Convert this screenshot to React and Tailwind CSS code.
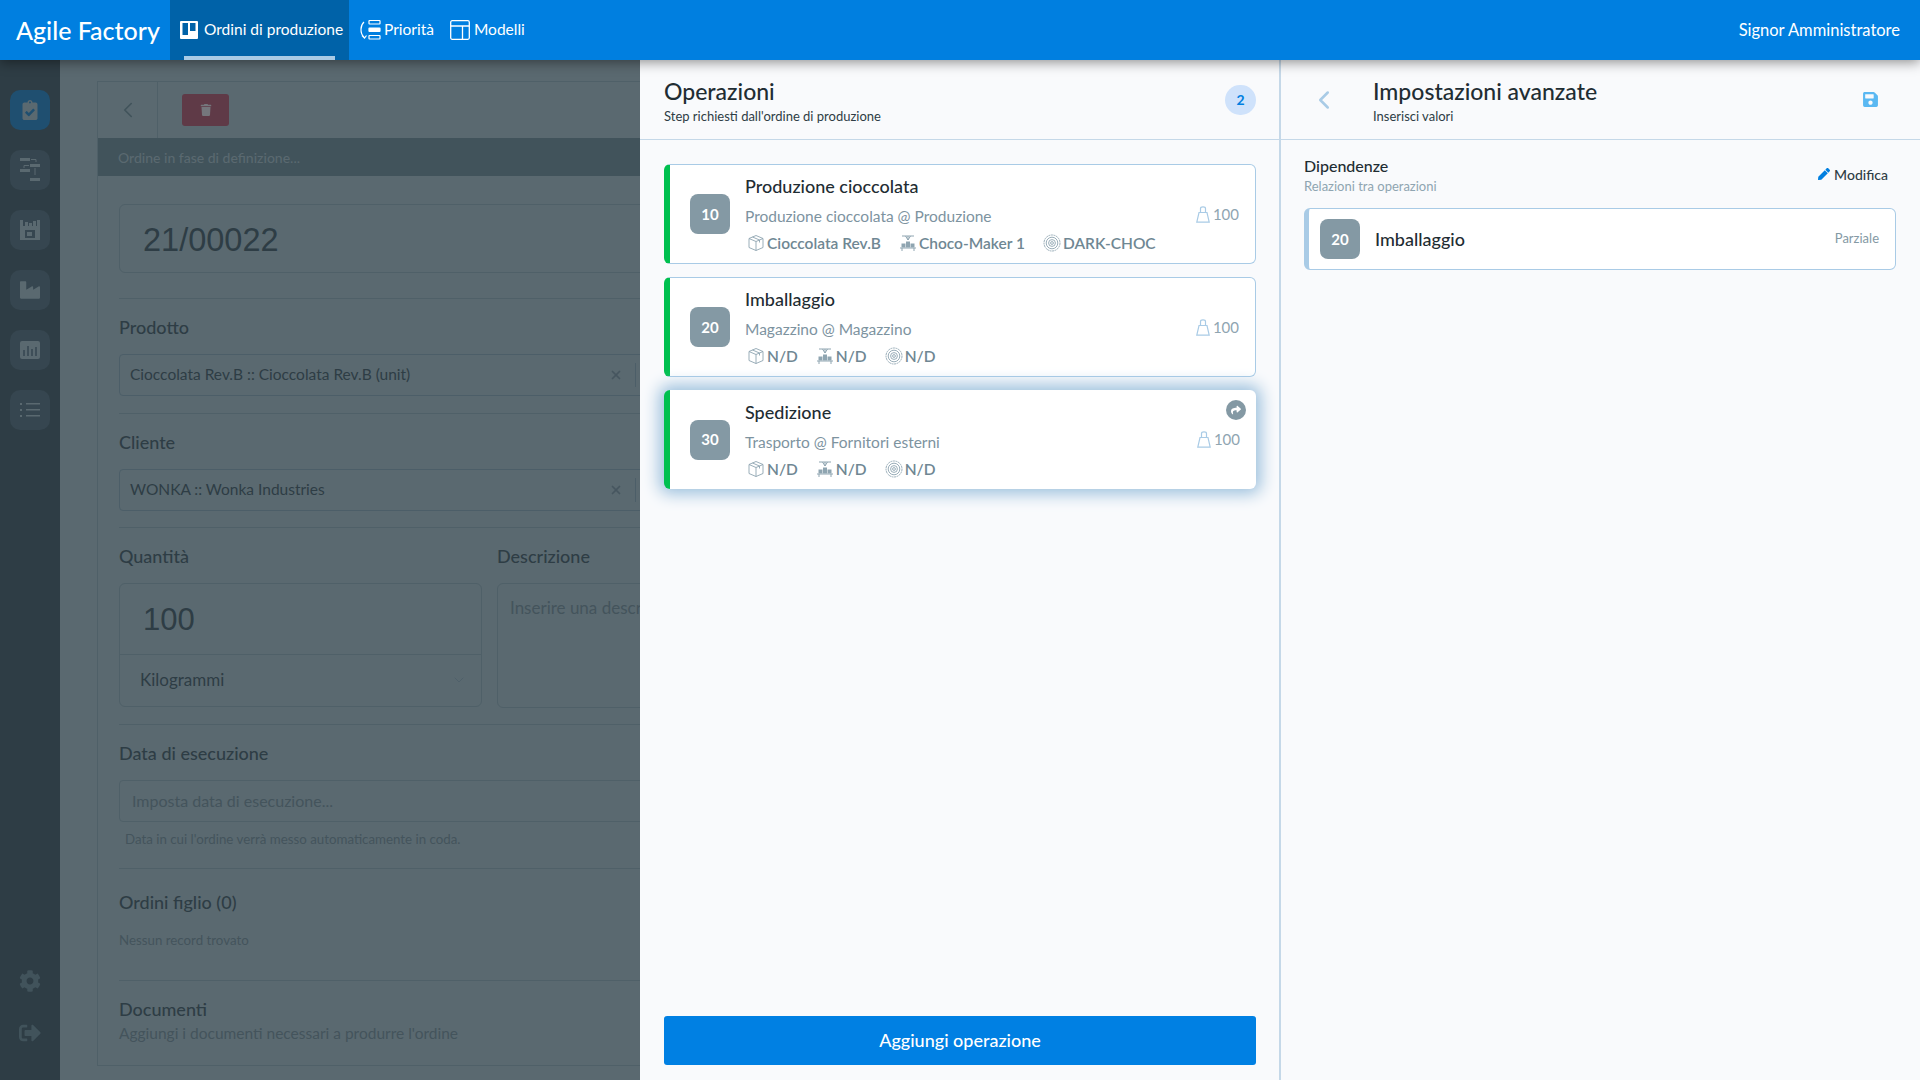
import { FaClipboardCheck, FaIndustry, FaTrash, FaCog, FaSave, FaPen, FaShare, FaSignOutAlt } from 'react-icons/fa';
import { ChevronLeft, ChevronDown, X } from 'lucide-react';

const font = { fontFamily: 'Lato, "Noto Sans", sans-serif' };
const digits = { fontFamily: '"Liberation Sans", sans-serif' };

const BoardIcon = () => (
  <svg width="18" height="18" viewBox="0 0 18 18" className="shrink-0">
    <rect x="0" y="0" width="18" height="18" rx="1" fill="#fff" />
    <rect x="2.5" y="2" width="5.5" height="12" fill="#0062a8" />
    <rect x="10" y="2" width="5.5" height="8" fill="#0062a8" />
  </svg>
);

const PriorityIcon = () => (
  <svg width="22" height="22" viewBox="0 0 22 22" fill="none" stroke="#fff" strokeWidth="1.2" className="shrink-0">
    <rect x="10" y="1.5" width="11" height="3.5" rx="0.5" />
    <rect x="10" y="9" width="11" height="3.5" rx="0.5" fill="#fff" />
    <rect x="10" y="16.5" width="11" height="3.5" rx="0.5" />
    <path d="M5 3C1.5 6 0.5 14 5 18M3 16.5L5.5 19L7.5 16.5" />
  </svg>
);

const TemplateIcon = () => (
  <svg width="20" height="20" viewBox="0 0 20 20" fill="none" stroke="#fff" strokeWidth="1.3" className="shrink-0">
    <rect x="0.7" y="0.7" width="18.6" height="18.6" rx="1.5" />
    <path d="M1 6H19M12.5 6V19" />
  </svg>
);

const BoxIcon = () => (
  <svg width="18" height="18" viewBox="0 0 18 18" fill="none" stroke="#8fa5b1" strokeWidth="0.9" className="shrink-0">
    <path d="M9 1.5L16 4.5V13.5L9 16.5L2 13.5V4.5Z" />
    <path d="M2 4.5L9 7.5L16 4.5M9 7.5V16.5M5.5 3L12.5 6V8.5" />
  </svg>
);

const MachineIcon = () => (
  <svg width="18" height="18" viewBox="0 0 18 18" fill="none" stroke="#8fa5b1" strokeWidth="1" className="shrink-0">
    <path d="M3 2H15M9 2V6M6.5 2L9 6L11.5 2M1 14H17M3 14V17M15 14V17" />
    <rect x="3" y="10" width="3" height="3" fill="#8fa5b1" />
    <rect x="7.5" y="8" width="3" height="5" fill="#8fa5b1" />
    <rect x="12" y="10" width="3" height="3" fill="#8fa5b1" />
  </svg>
);

const RingIcon = () => (
  <svg width="18" height="18" viewBox="0 0 18 18" fill="none" stroke="#8fa5b1" strokeWidth="0.9" className="shrink-0">
    <circle cx="9" cy="9" r="8" strokeDasharray="2 0.6" />
    <circle cx="9" cy="9" r="5.8" />
    <circle cx="9" cy="9" r="3.4" />
    <circle cx="9" cy="9" r="1.4" />
  </svg>
);

const WeightIcon = () => (
  <svg width="14" height="17" viewBox="0 0 14 17" fill="none" stroke="#a9cbe6" strokeWidth="1.2" className="shrink-0">
    <path d="M4.5 6.5V2.5C4.5 1.4 5.4 0.8 7 0.8C8.6 0.8 9.5 1.4 9.5 2.5V6.5" />
    <path d="M3 6.5H11L13.2 16.2H0.8Z" />
  </svg>
);

const FlowIcon = () => (
  <svg width="20" height="24" viewBox="0 0 20 24" fill="#5a6970" className="shrink-0">
    <rect x="0" y="0" width="10" height="3" />
    <path d="M11 1.5H16V4" fill="none" stroke="#5a6970" />
    <rect x="10" y="6" width="10" height="3" />
    <rect x="0" y="11" width="10" height="3" />
    <path d="M9 7.5H4V10" fill="none" stroke="#5a6970" />
    <path d="M15 10V17" fill="none" stroke="#5a6970" />
    <rect x="10" y="20" width="10" height="3" />
  </svg>
);

const WarehouseIcon = () => (
  <svg width="20" height="20" viewBox="0 0 20 20" className="shrink-0">
    <path d="M0 0H3V6H17V0H20V20H0Z" fill="#5a6970" />
    <rect x="5" y="2" width="3" height="4" fill="#5a6970" />
    <rect x="9" y="3" width="3" height="3" fill="#5a6970" />
    <rect x="13" y="1" width="3" height="5" fill="#5a6970" />
    <rect x="5" y="10" width="10" height="8" fill="#364650" />
    <rect x="7" y="12" width="5" height="4" fill="#5a6970" />
  </svg>
);

const ChartIcon = () => (
  <svg width="20" height="18" viewBox="0 0 20 18" className="shrink-0">
    <rect width="20" height="18" rx="2" fill="#5a6970" />
    <path d="M4 9V15M8 5V15M12 8V15M16 6V15" stroke="#364650" strokeWidth="1.5" />
  </svg>
);

const ListIcon = () => (
  <svg width="20" height="16" viewBox="0 0 20 16" fill="#5a6970" className="shrink-0">
    <rect x="0" y="1" width="2" height="2" />
    <rect x="6" y="1" width="14" height="1.5" />
    <rect x="0" y="7" width="2" height="2" />
    <rect x="6" y="7" width="14" height="1.5" />
    <rect x="0" y="13" width="2" height="2" />
    <rect x="6" y="13" width="14" height="1.5" />
  </svg>
);

const Tile = ({ active, children }) => (
  <div className={`w-10 h-10 rounded-[10px] flex items-center justify-center ${active ? 'bg-[#1f4f70]' : 'bg-[#364650]'}`}>
    {children}
  </div>
);

const Sidebar = () => (
  <div className="w-[60px] shrink-0 bg-[#2e3d45] flex flex-col items-center pt-[30px] pb-[36px]">
    <div className="flex flex-col gap-5">
      <Tile active><FaClipboardCheck size={20} color="#5a6970" /></Tile>
      <Tile><FlowIcon /></Tile>
      <Tile><WarehouseIcon /></Tile>
      <Tile><FaIndustry size={20} color="#5a6970" /></Tile>
      <Tile><ChartIcon /></Tile>
      <Tile><ListIcon /></Tile>
    </div>
    <div className="mt-auto flex flex-col items-center gap-[30px]">
      <FaCog size={22} color="#41535b" />
      <FaSignOutAlt size={22} color="#41535b" />
    </div>
  </div>
);

const Field = ({ children }) => (
  <div className="h-[42px] border border-[#4c5e68] rounded-[4px] flex items-center pl-[10px] pr-[82px] text-[15.5px] text-[#2e3d45]">
    <span className="flex-1 whitespace-nowrap">{children}</span>
    <X size={14} strokeWidth={3} color="#46565f" />
    <div className="w-px h-6 bg-[#4c5e68] ml-[12px]" />
  </div>
);

const Divider = () => <div className="h-px bg-[#4f6068]" />;

const Label = ({ children }) => (
  <div className="text-[18px] leading-[24px] font-medium text-[#2e3d45] whitespace-nowrap">{children}</div>
);

const OrderForm = () => (
  <div className="w-[580px] shrink-0 bg-[#5a6970] overflow-hidden pt-[21px] pl-[37px] h-[1020px]">
    <div className="w-[800px] h-[985px] border border-[#4f6068] flex flex-col">
      <div className="h-[56px] flex items-center shrink-0">
        <div className="w-[60px] h-full flex items-center justify-center border-r border-[#4f6068]">
          <ChevronLeft size={26} strokeWidth={1.5} color="#41535b" />
        </div>
        <div className="ml-[24px] w-[47px] h-[32px] rounded-[3px] bg-[#5f3a47] flex items-center justify-center">
          <FaTrash size={12} color="#75767c" />
        </div>
      </div>
      <div className="h-[38px] shrink-0 bg-[#41535b] flex items-center pl-[20px] text-[14px] font-medium text-[#5a6970]">
        Ordine in fase di definizione...
      </div>
      <div className="pl-[21px] w-[621px]">
        <div className="mt-[28px] h-[69px] border border-[#4f6068] rounded-[6px] flex items-center pl-[23px] pt-[3px] text-[32.5px] text-[#2e3d45]" style={digits}>
          21/00022
        </div>
        <div className="mt-[25px]"><Divider /></div>
        <div className="mt-[16px]">
          <Label>Prodotto</Label>
          <div className="mt-[15px]"><Field>Cioccolata Rev.B :: Cioccolata Rev.B (unit)</Field></div>
          <div className="mt-[17px]"><Divider /></div>
          <div className="mt-[16px]"><Label>Cliente</Label></div>
          <div className="mt-[15px]"><Field>WONKA :: Wonka Industries</Field></div>
          <div className="mt-[16px]"><Divider /></div>
        </div>
        <div className="mt-[16px] flex gap-[15px]">
          <div className="w-[363px] shrink-0">
            <Label>Quantità</Label>
            <div className="mt-[15px] h-[124px] border border-[#4f6068] rounded-[6px] flex flex-col">
              <div className="h-[71px] flex items-center pl-[23px] pt-[3px] text-[31px] text-[#2e3d45] border-b border-[#4f6068]" style={digits}>100</div>
              <div className="flex-1 flex items-center justify-between pl-[20px] pr-[14px] pb-[2px] text-[17px] text-[#2e3d45]">
                Kilogrammi
                <ChevronDown size={16} strokeWidth={1.2} color="#4c5e68" />
              </div>
            </div>
          </div>
          <div className="flex-1 min-w-0">
            <Label>Descrizione</Label>
            <div className="mt-[15px] h-[125px] w-[400px] border border-[#4f6068] rounded-[6px] pl-[12px] pt-[11px] text-[17px] text-[#44545c] whitespace-nowrap">
              Inserire una descrizione
            </div>
          </div>
        </div>
        <div className="mt-[16px]"><Divider /></div>
        <div className="mt-[16px]">
          <Label>Data di esecuzione</Label>
          <div className="mt-[15px] h-[42px] border border-[#4f6068] rounded-[4px] flex items-center pl-[12px] text-[16px] text-[#44545c]">
            Imposta data di esecuzione...
          </div>
          <div className="mt-[9px] pl-[6px] text-[13.3px] leading-[16px] text-[#44545c]">
            Data in cui l'ordine verrà messo automaticamente in coda.
          </div>
          <div className="mt-[21px]"><Divider /></div>
          <div className="mt-[21px]"><Label>Ordini figlio (0)</Label></div>
          <div className="mt-[18px] text-[13.3px] leading-[16px] text-[#44545c]">Nessun record trovato</div>
          <div className="mt-[32px]"><Divider /></div>
          <div className="mt-[16px]"><Label>Documenti</Label></div>
          <div className="mt-[2px] text-[15.5px] leading-[20px] text-[#44545c]">Aggiungi i documenti necessari a produrre l'ordine</div>
        </div>
      </div>
    </div>
  </div>
);

const Meta = ({ icon, children }) => (
  <span className="flex items-center gap-[2px] whitespace-nowrap">
    {icon}
    {children}
  </span>
);

const StepBadge = ({ children }) => (
  <div className="w-10 h-10 shrink-0 rounded-[8px] bg-[#8499a4] flex items-center justify-center text-[15px] font-bold text-white">
    {children}
  </div>
);

const OperationCard = ({ number, title, desc, product, machine, code, selected }) => (
  <div className={`relative bg-white rounded-[6px] border-l-[6px] border-l-[#00c04f] flex items-center pl-[20px] pr-[16px] ${selected ? 'h-[99px] shadow-[0_0_16px_5px_#9cc0dd]' : 'h-[100px] border border-[#a9cbe6]'}`}>
    {selected && (
      <div className="absolute right-[10px] top-[10px] w-5 h-5 rounded-full bg-[#8499a4] flex items-center justify-center">
        <FaShare size={10} color="#fff" />
      </div>
    )}
    <StepBadge>{number}</StepBadge>
    <div className="ml-[15px] flex-1 min-w-0">
      <div className="text-[18px] leading-[24px] font-medium text-[#1f2d33] -mt-[1px]">{title}</div>
      <div className="mt-[8px] text-[15.5px] leading-[20px] text-[#7d939f]">{desc}</div>
      <div className="mt-[7px] pl-[2px] flex items-center gap-[18px] text-[15.5px] leading-[20px] font-semibold text-[#6f8793]">
        <Meta icon={<BoxIcon />}>{product}</Meta>
        <Meta icon={<MachineIcon />}>{machine}</Meta>
        <Meta icon={<RingIcon />}>{code}</Meta>
      </div>
    </div>
    <div className="flex items-center gap-[3px] text-[15px] text-[#8fa5b1]">
      <WeightIcon />
      100
    </div>
  </div>
);

const OperationsPanel = () => (
  <div className="w-[639px] shrink-0 bg-[#f9fafc] flex flex-col h-[1020px]">
    <div className="h-[80px] shrink-0 border-b border-[#c5d8e8] flex items-center justify-between pl-[24px] pr-[23px]">
      <div>
        <div className="mt-[1px] text-[23px] leading-[28px] font-medium text-[#1f2d33]">Operazioni</div>
        <div className="mt-[3px] text-[13px] leading-[16px] text-[#2e3d45]">Step richiesti dall'ordine di produzione</div>
      </div>
      <div className="w-[31px] h-[30px] rounded-full bg-[#cfe2fb] flex items-center justify-center text-[14px] font-bold text-[#007fe0]">2</div>
    </div>
    <div className="flex-1 flex flex-col gap-[13px] pl-[24px] pr-[23px] pt-[24px]">
      <OperationCard number="10" title="Produzione cioccolata" desc="Produzione cioccolata @ Produzione" product="Cioccolata Rev.B" machine="Choco-Maker 1" code="DARK-CHOC" />
      <OperationCard number="20" title="Imballaggio" desc="Magazzino @ Magazzino" product="N/D" machine="N/D" code="N/D" />
      <OperationCard number="30" title="Spedizione" desc="Trasporto @ Fornitori esterni" product="N/D" machine="N/D" code="N/D" selected />
    </div>
    <div className="pl-[24px] pr-[23px] pb-[15px]">
      <button className="w-full h-[49px] rounded-[3px] bg-[#0080e3] text-white text-[18px] font-medium">Aggiungi operazione</button>
    </div>
  </div>
);

const SettingsPanel = () => (
  <div className="w-[641px] shrink-0 bg-[#f9fafc] border-l-2 border-[#c5d8e8] flex flex-col h-[1020px]">
    <div className="h-[80px] shrink-0 border-b border-[#c5d8e8] flex items-center pl-[28px] pr-[41px]">
      <ChevronLeft size={30} strokeWidth={2} color="#a9cbe6" />
      <div className="ml-[34px] flex-1">
        <div className="mt-[1px] text-[23px] leading-[28px] font-medium text-[#1f2d33]">Impostazioni avanzate</div>
        <div className="mt-[3px] text-[13px] leading-[16px] text-[#2e3d45]">Inserisci valori</div>
      </div>
      <FaSave size={17} color="#5ab8f2" />
    </div>
    <div className="pl-[23px] pr-[24px] pt-[16px]">
      <div className="flex items-center justify-between">
        <div>
          <div className="text-[16px] leading-[20px] font-medium text-[#1f2d33]">Dipendenze</div>
          <div className="mt-[2px] text-[13px] leading-[16px] text-[#8fa5b1]">Relazioni tra operazioni</div>
        </div>
        <div className="flex items-center gap-[4px] text-[14px] font-medium text-[#2e3d45] pr-[8px] pb-[2px]">
          <FaPen size={12} color="#007fe0" />
          Modifica
        </div>
      </div>
      <div className="mt-[14px] h-[62px] bg-white rounded-[6px] border border-[#a9cbe6] border-l-[5px] flex items-center pl-[11px] pr-[16px]">
        <StepBadge>20</StepBadge>
        <div className="ml-[15px] flex-1 text-[18px] font-medium text-[#1f2d33]">Imballaggio</div>
        <div className="text-[13px] text-[#8499a4]">Parziale</div>
      </div>
    </div>
  </div>
);

const TopBar = () => (
  <div className="h-[60px] bg-[#007fe0] flex items-center relative z-10 shadow-[0_2px_12px_rgba(0,0,0,0.45)]">
    <div className="w-[170px] shrink-0 pl-[16px] pt-[2px] text-[25px] font-medium text-white whitespace-nowrap">Agile Factory</div>
    <div className="relative h-full w-[179px] bg-[#0062a8] flex items-center pl-[10px] gap-[6px] text-[15.5px] text-white whitespace-nowrap">
      <BoardIcon />
      Ordini di produzione
      <div className="absolute left-[14px] bottom-0 w-[151px] h-[4px] bg-[#a9cbe6]" />
    </div>
    <div className="ml-[10px] flex items-center gap-[3px] text-[15.5px] text-white">
      <PriorityIcon />
      Priorità
    </div>
    <div className="ml-[16px] flex items-center gap-[4px] text-[15.5px] text-white">
      <TemplateIcon />
      Modelli
    </div>
    <div className="ml-auto pr-[20px] pt-[1px] text-[16.5px] text-white">Signor Amministratore</div>
  </div>
);

const App = () => (
  <div className="w-[1920px] h-[1080px] overflow-hidden flex flex-col" style={font}>
    <TopBar />
    <div className="flex flex-1 min-h-0">
      <Sidebar />
      <OrderForm />
      <OperationsPanel />
      <SettingsPanel />
    </div>
  </div>
);

export default App;
